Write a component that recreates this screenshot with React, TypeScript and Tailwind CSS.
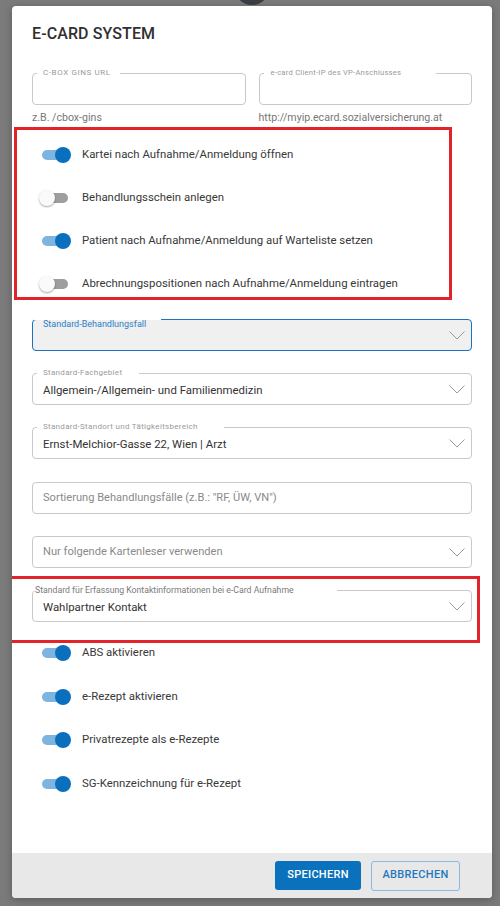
import React from "react";

type FieldProps = {
  label?: string;
  value?: string;
  placeholder?: string;
  select?: boolean;
  focused?: boolean;
  notchLeft?: string;
  notchWidth?: string;
  labelClass?: string;
};

function Chevron() {
  return (
    <svg width="16" height="9" viewBox="0 0 16 9" className="shrink-0 text-[#9a9a9a]" aria-hidden="true">
      <path d="M0.5 0.5 L8 8 L15.5 0.5" fill="none" stroke="currentColor" strokeWidth="1" />
    </svg>
  );
}

function Field({ label, value, placeholder, select, focused, notchLeft = "left-[4px]", notchWidth = "w-[80px]", labelClass = "" }: FieldProps) {
  return (
    <div
      className={
        "relative flex h-8 items-center rounded-[4px] border pl-[10px] pr-[6px] " +
        (focused ? "border-[#1a73c0] bg-[#f0f0f0]" : "border-[#c9c9c9] bg-white")
      }
    >
      {label && (
        <>
          <span className={"absolute top-[-1px] h-[1px] bg-white " + notchLeft + " " + notchWidth} />
          <span className={"absolute whitespace-nowrap " + labelClass}>{label}</span>
        </>
      )}
      <span
        className={
          "flex-1 truncate " +
          (value ? "pt-[3px] text-[11.4px] text-[#333]" : "pt-[1px] text-[11.1px] text-[#8a8a8a]")
        }
      >
        {value || placeholder}
      </span>
      {select && <Chevron />}
    </div>
  );
}

function Toggle({ on, label }: { on: boolean; label: string }) {
  return (
    <div className="flex h-5 items-center">
      <div className="relative flex h-4 w-8 shrink-0 items-center">
        <div className={"ml-[3px] h-[10px] w-[26px] rounded-full " + (on ? "bg-[#7db4e0]" : "bg-[#9e9e9e]")} />
        <div
          className={
            "absolute top-0 h-4 w-4 rounded-full " +
            (on ? "left-[16px] bg-[#0a70bd]" : "left-0 bg-[#fafafa] shadow-[0_1px_2px_rgba(0,0,0,0.35)]")
          }
        />
      </div>
      <span className="ml-[11px] whitespace-nowrap text-[11.4px] text-[#383838]">{label}</span>
    </div>
  );
}

const smallLabel = "left-[10px] top-[-6px] leading-[10px] tracking-[0.3px] text-[#9a9a9a]";

export default function App() {
  return (
    <div
      className="relative h-[906px] w-full overflow-hidden bg-[#7b7b7b] px-[12px] pt-[6px]"
      style={{ fontFamily: "Roboto, 'Liberation Sans', sans-serif" }}
    >
      <div className="absolute left-[234px] top-[-31px] h-[36px] w-[36px] rounded-full bg-[#3b3e44]" />
      <div className="relative flex h-[892px] w-[480px] flex-col overflow-hidden rounded-[4px] bg-white shadow-[0_2px_8px_rgba(0,0,0,0.25)]">
        <div className="flex-1 px-[20px] pt-[18px]">
          <h1 className="text-[16px] font-medium leading-[20px] tracking-[0.1px] text-[#303030]">E-CARD SYSTEM</h1>

          <div className="mt-[29px] grid grid-cols-2 gap-x-[13px]">
            <div>
              <Field
                label="C-BOX GINS URL"
                notchWidth="w-[83px]"
                labelClass={smallLabel + " text-[8px] tracking-[0.6px]"}
              />
              <p className="mt-[7px] text-[10.6px] leading-[12px] text-[#777]">z.B. /cbox-gins</p>
            </div>
            <div>
              <Field
                label="e-card Client-IP des VP-Anschlusses"
                notchWidth="w-[172px]"
                labelClass={smallLabel + " left-[11px] text-[7.6px] tracking-[0.25px]"}
              />
              <p className="mt-[7px] text-[10.6px] leading-[12px] text-[#777]">http://myip.ecard.sozialversicherung.at</p>
            </div>
          </div>

          <div className="ml-[-18px] mt-[3px] w-[438px] border-[3px] border-[#e3232a] pb-[3px] pl-[22px] pt-[15px]">
            <div className="flex flex-col gap-[23px]">
              <Toggle on label="Kartei nach Aufnahme/Anmeldung öffnen" />
              <Toggle on={false} label="Behandlungsschein anlegen" />
              <Toggle on label="Patient nach Aufnahme/Anmeldung auf Warteliste setzen" />
              <Toggle on={false} label="Abrechnungspositionen nach Aufnahme/Anmeldung eintragen" />
            </div>
          </div>

          <div className="mt-[19px]">
            <Field
              select
              focused
              label="Standard-Behandlungsfall"
              notchLeft="left-[1px]"
              notchWidth="w-[127px]"
              labelClass="left-[10px] top-[-1px] text-[9px] leading-[11px] text-[#2a7fc6]"
            />
          </div>
          <div className="mt-[22px]">
            <Field
              select
              label="Standard-Fachgebiet"
              value="Allgemein-/Allgemein- und Familienmedizin"
              notchWidth="w-[102px]"
              labelClass={smallLabel + " text-[8px]"}
            />
          </div>
          <div className="mt-[22px]">
            <Field
              select
              label="Standard-Standort und Tätigkeitsbereich"
              value="Ernst-Melchior-Gasse 22, Wien | Arzt"
              notchWidth="w-[187px]"
              labelClass={smallLabel + " text-[8px]"}
            />
          </div>
          <div className="mt-[23px]">
            <Field placeholder={'Sortierung Behandlungsfälle (z.B.: "RF, ÜW, VN")'} />
          </div>
          <div className="mt-[22px]">
            <Field select placeholder="Nur folgende Kartenleser verwenden" />
          </div>

          <div className="ml-[-24px] mr-[-8px] mt-[8px] border-[3px] border-[#e3232a] pb-[18px] pl-[21px] pr-[5px] pt-[11px]">
            <Field
              select
              label="Standard für Erfassung Kontaktinformationen bei e-Card Aufnahme"
              value="Wahlpartner Kontakt"
              notchLeft="left-[1px]"
              notchWidth="w-[303px]"
              labelClass="left-[2px] top-[-6px] text-[8.7px] leading-[10px] text-[#7a7a7a]"
            />
          </div>

          <div className="flex flex-col gap-[23.5px] pl-[7px]">
            <Toggle on label="ABS aktivieren" />
            <Toggle on label="e-Rezept aktivieren" />
            <Toggle on label="Privatrezepte als e-Rezepte" />
            <Toggle on label="SG-Kennzeichnung für e-Rezept" />
          </div>
        </div>

        <div className="flex h-[45px] items-center justify-end gap-[10px] bg-[#e8e8e8] pr-[32px]">
          <button className="h-[29px] w-[86px] rounded-[3px] bg-[#0a72bd] text-[11px] font-medium tracking-[0.3px] text-white">
            SPEICHERN
          </button>
          <button className="h-[30px] w-[89px] rounded-[3px] border border-[#8ab9e0] text-[11px] font-medium tracking-[0.3px] text-[#1f77bf]">
            ABBRECHEN
          </button>
        </div>
      </div>
    </div>
  );
}
